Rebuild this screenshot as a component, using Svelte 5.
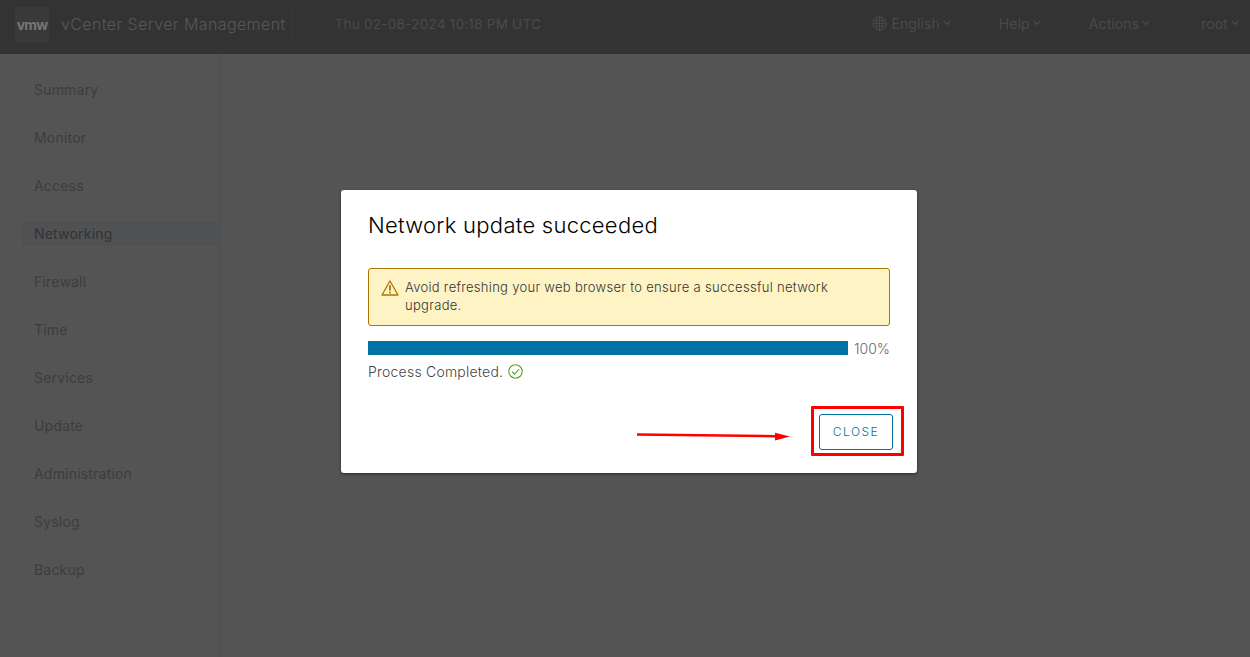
<script>
  const nav = ['Summary','Monitor','Access','Networking','Firewall','Time','Services','Update','Administration','Syslog','Backup'];
  const menus = ['Help','Actions','root'];
</script>

<div class="page">
  <header class="top">
    <div class="logo">vmw</div>
    <div class="product">vCenter Server Management</div>
    <div class="sep"></div>
    <div class="clock">Thu 02-08-2024 10:18 PM UTC</div>
    <div class="spacer"></div>
    <div class="menu lang">
      <svg class="globe" width="15" height="15" viewBox="0 0 16 16" fill="none" stroke="#4a4a4a" stroke-width="1">
        <circle cx="8" cy="8" r="7.2"/><ellipse cx="8" cy="8" rx="3.4" ry="7.2"/><path d="M8 .8v14.4M1.6 5h12.8M1.6 8h12.8M1.6 11h12.8"/>
      </svg>
      <span>English</span>
      <svg class="chev" width="8" height="6" viewBox="0 0 8 6" fill="none" stroke="#4d4d4d" stroke-width="1.1"><path d="M.8 1.2 4 4.4l3.2-3.2"/></svg>
    </div>
    {#each menus as m}
      <div class="menu {m}">
        <span>{m}</span>
        <svg class="chev" width="8" height="6" viewBox="0 0 8 6" fill="none" stroke="#4d4d4d" stroke-width="1.1"><path d="M.8 1.2 4 4.4l3.2-3.2"/></svg>
      </div>
    {/each}
  </header>

  <div class="body">
    <nav class="side">
      {#each nav as n}
        <div class="item" class:active={n === 'Networking'}>{n}</div>
      {/each}
    </nav>
    <main class="content"></main>
  </div>

  <div class="backdrop">
    <section class="modal">
      <h2>Network update succeeded</h2>
      <div class="alert">
        <svg width="18" height="16" viewBox="0 0 18 16" fill="none">
          <path d="M9 1 1 15h16z" stroke="#ad7600" stroke-width="1.3" stroke-linejoin="round"/>
          <path d="M9 5.2v5.3" stroke="#ad7600" stroke-width="1.8"/><circle cx="9" cy="12.6" r="1" fill="#ad7600"/>
        </svg>
        <p>Avoid refreshing your web browser to ensure a successful network upgrade.</p>
      </div>
      <div class="progress">
        <div class="bar"></div>
        <span class="pct">100%</span>
      </div>
      <div class="status">
        <span>Process Completed.</span>
        <svg width="15" height="15" viewBox="0 0 15 15" fill="none" stroke="#5aa220" stroke-width="1.1">
          <circle cx="7.5" cy="7.5" r="6.7"/><path d="M4 7.6l2.6 2.6L11.2 5"/>
        </svg>
      </div>
      <div class="actions">
        <button>CLOSE</button>
        <div class="redbox"></div>
      </div>
      <svg class="arrow" width="156" height="12" viewBox="0 0 156 12">
        <path d="M0 4.5 138 6.2" stroke="#f00" stroke-width="2.4" stroke-linecap="round" fill="none"/>
        <path d="M138 2.7 153 6.5 138 10.4z" fill="#f00"/>
      </svg>
    </section>
  </div>
</div>

<style>
  :global(body) {
    margin: 0;
    background: #545454;
    font-family: Inter, "Liberation Sans", sans-serif;
  }
  .page {
    position: relative;
    height: 657px;
    overflow: hidden;
    background: #545454;
  }
  .top {
    height: 54px;
    box-sizing: border-box;
    background: #333333;
    display: flex;
    align-items: center;
    padding: 0 0 6px 15px;
    color: #5b5b5b;
  }
  .logo {
    width: 34px;
    height: 35px;
    display: flex;
    align-items: center;
    justify-content: center;
    background: #393939;
    color: #767676;
    font-size: 14px;
    font-weight: 700;
    letter-spacing: -0.8px;
  }
  .product {
    margin-left: 12px;
    font-size: 16px;
    font-weight: 300;
    letter-spacing: 0.4px;
    color: #585858;
    white-space: nowrap;
  }
  .sep {
    width: 1px;
    height: 40px;
    margin-left: 5px;
    background: #383838;
  }
  .clock {
    margin-left: 43px;
    font-size: 13.5px;
    letter-spacing: 0.25px;
    color: #4b4b4b;
    white-space: nowrap;
  }
  .spacer { flex: 1; }
  .menu {
    display: flex;
    align-items: center;
    gap: 3px;
    padding-bottom: 2px;
    font-size: 14px;
    letter-spacing: 0.1px;
    color: #4a4a4a;
  }
  .globe { margin-right: 1px; }
  .Help { margin-left: 48px; }
  .Actions { margin-left: 48px; }
  .root { margin-left: 51px; margin-right: 11px; }
  .body {
    display: flex;
    height: 603px;
  }
  .side {
    width: 221px;
    flex: none;
    box-sizing: border-box;
    border-right: 1px solid #4e4e4e;
    padding: 12px 0 0 22px;
  }
  .item {
    height: 24px;
    line-height: 24px;
    margin: 12px 0 24px;
    padding-left: 12px;
    font-size: 14px;
    letter-spacing: 0.2px;
    color: #3d3d3d;
  }
  .item.active {
    background: #4f5153;
    margin-right: -1px;
    color: #333;
  }
  .content { flex: 1; }
  .backdrop {
    position: absolute;
    inset: 0;
    display: flex;
    align-items: flex-start;
    justify-content: flex-start;
    padding: 190px 0 0 341px;
    box-sizing: border-box;
  }
  .modal {
    position: relative;
    width: 576px;
    height: 283px;
    box-sizing: border-box;
    padding: 0 27px;
    background: #fff;
    border-radius: 3px;
    box-shadow: 0 1px 3px rgba(0, 0, 0, 0.5);
  }
  h2 {
    margin: 0;
    padding-top: 22px;
    font-size: 22px;
    line-height: 26px;
    font-weight: 300;
    letter-spacing: 0.27px;
    color: #000;
  }
  .alert {
    margin-top: 30px;
    height: 58px;
    box-sizing: border-box;
    border: 1px solid #ad7600;
    border-radius: 3px;
    background: #fef3c4;
    display: flex;
    align-items: flex-start;
    padding: 9px 11px;
    color: #333;
  }
  .alert svg { flex: none; margin: 2px 0 0 1px; }
  .alert p {
    margin: 0 0 0 6px;
    font-size: 13px;
    font-weight: 300;
    line-height: 18px;
    letter-spacing: 0.3px;
  }
  .progress {
    display: flex;
    align-items: center;
    margin-top: 15px;
    height: 14px;
  }
  .bar {
    width: 480px;
    height: 14px;
    background: #0072a3;
  }
  .pct {
    margin-left: 6px;
    font-size: 14px;
    font-weight: 300;
    color: #666;
  }
  .status {
    display: flex;
    align-items: center;
    gap: 5px;
    margin-top: 7px;
    height: 19px;
    font-size: 14px;
    font-weight: 300;
    letter-spacing: 0.22px;
    color: #444;
  }
  .actions {
    position: absolute;
    left: 478px;
    top: 224px;
  }
  button {
    display: block;
    width: 74px;
    height: 36px;
    box-sizing: border-box;
    border: 1px solid #0072a3;
    border-radius: 3px;
    background: #fff;
    color: #0072a3;
    font-family: inherit;
    font-size: 12px;
    font-weight: 300;
    letter-spacing: 1.5px;
    padding: 0 0 2px;
  }
  .redbox {
    position: absolute;
    left: -8px;
    top: -8px;
    width: 93px;
    height: 50px;
    box-sizing: border-box;
    border: 3px solid #f00;
    border-radius: 1px;
  }
  .arrow {
    position: absolute;
    left: 296px;
    top: 240px;
  }
</style>
